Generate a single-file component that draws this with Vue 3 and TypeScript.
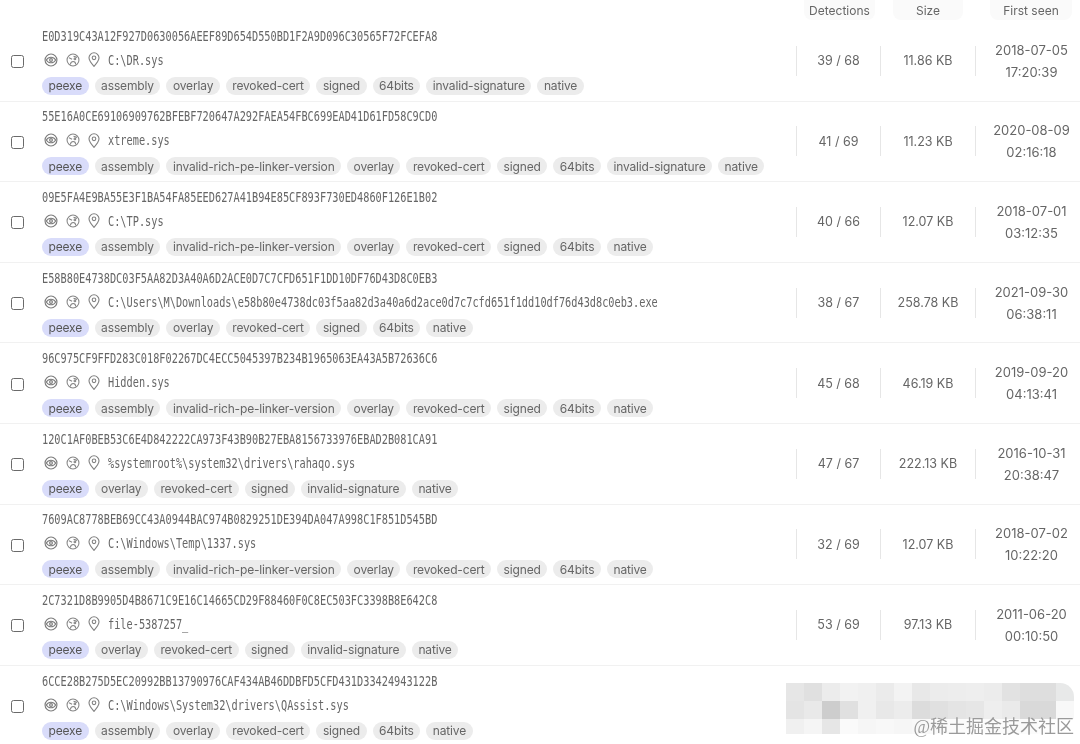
<script setup lang="ts">
interface Sample {
  hash: string
  name: string
  tags: string[]
  detections: string
  size: string
  date: string
  time: string
}

const rich = 'invalid-rich-pe-linker-version'

const samples: Sample[] = [
  { hash: 'E0D319C43A12F927D0630056AEEF89D654D550BD1F2A9D096C30565F72FCEFA8', name: 'C:\\DR.sys', tags: ['peexe', 'assembly', 'overlay', 'revoked-cert', 'signed', '64bits', 'invalid-signature', 'native'], detections: '39 / 68', size: '11.86 KB', date: '2018-07-05', time: '17:20:39' },
  { hash: '55E16A0CE69106909762BFEBF720647A292FAEA54FBC699EAD41D61FD58C9CD0', name: 'xtreme.sys', tags: ['peexe', 'assembly', rich, 'overlay', 'revoked-cert', 'signed', '64bits', 'invalid-signature', 'native'], detections: '41 / 69', size: '11.23 KB', date: '2020-08-09', time: '02:16:18' },
  { hash: '09E5FA4E9BA55E3F1BA54FA85EED627A41B94E85CF893F730ED4860F126E1B02', name: 'C:\\TP.sys', tags: ['peexe', 'assembly', rich, 'overlay', 'revoked-cert', 'signed', '64bits', 'native'], detections: '40 / 66', size: '12.07 KB', date: '2018-07-01', time: '03:12:35' },
  { hash: 'E58B80E4738DC03F5AA82D3A40A6D2ACE0D7C7CFD651F1DD10DF76D43D8C0EB3', name: 'C:\\Users\\M\\Downloads\\e58b80e4738dc03f5aa82d3a40a6d2ace0d7c7cfd651f1dd10df76d43d8c0eb3.exe', tags: ['peexe', 'assembly', 'overlay', 'revoked-cert', 'signed', '64bits', 'native'], detections: '38 / 67', size: '258.78 KB', date: '2021-09-30', time: '06:38:11' },
  { hash: '96C975CF9FFD283C018F02267DC4ECC5045397B234B1965063EA43A5B72636C6', name: 'Hidden.sys', tags: ['peexe', 'assembly', rich, 'overlay', 'revoked-cert', 'signed', '64bits', 'native'], detections: '45 / 68', size: '46.19 KB', date: '2019-09-20', time: '04:13:41' },
  { hash: '120C1AF0BEB53C6E4D842222CA973F43B90B27EBA8156733976EBAD2B081CA91', name: '%systemroot%\\system32\\drivers\\rahaqo.sys', tags: ['peexe', 'overlay', 'revoked-cert', 'signed', 'invalid-signature', 'native'], detections: '47 / 67', size: '222.13 KB', date: '2016-10-31', time: '20:38:47' },
  { hash: '7609AC8778BEB69CC43A0944BAC974B0829251DE394DA047A998C1F851D545BD', name: 'C:\\Windows\\Temp\\1337.sys', tags: ['peexe', 'assembly', rich, 'overlay', 'revoked-cert', 'signed', '64bits', 'native'], detections: '32 / 69', size: '12.07 KB', date: '2018-07-02', time: '10:22:20' },
  { hash: '2C7321D8B9905D4B8671C9E16C14665CD29F88460F0C8EC503FC3398B8E642C8', name: 'file-5387257_', tags: ['peexe', 'overlay', 'revoked-cert', 'signed', 'invalid-signature', 'native'], detections: '53 / 69', size: '97.13 KB', date: '2011-06-20', time: '00:10:50' },
  { hash: '6CCE28B275D5EC20992BB13790976CAF434AB46DDBFD5CFD431D33424943122B', name: 'C:\\Windows\\System32\\drivers\\QAssist.sys', tags: ['peexe', 'assembly', 'overlay', 'revoked-cert', 'signed', '64bits', 'native'], detections: '', size: '', date: '', time: '' }
]

// mosaic that hides the last row's figures
const mosaic: string[] = [
  '#e6e6e6', '#e0e0e0', '#ececec', '#f2f2f2', '#f0f0f0', '#ebebeb', '#f3f3f3', '#e8e8e8', '#ececec', '#ededed', '#eeeeee', '#ececec', '#e2e2e2', '#dedede', '#dedede', '#e8e9e9',
  '#e4e4e4', '#e9e9e9', '#cdcdcd', '#e0e0e0', '#f0f0f0', '#e8e8e8', '#ececec', '#dcdcdc', '#e0e0e0', '#e4e4e4', '#e6e6e6', '#eeeeee', '#eaeaea', '#d9d9d9', '#d9d9d9', '#f8f8f8',
  '#f0f0f0', '#f5f5f5', '#e6e6e6', '#fafafa', '#f6f6f6', '#f8f8f8', '#f6f6f6', '#f8f8f8', '#fafafa', '#fbfbfb', '#fcfcfc', '#fbfbfb', '#fbfbfb', '#fbfbfb', '#fdfdfd', '#ffffff'
]
</script>

<template>
  <div class="page">
    <header class="head">
      <span class="head-chip detections">Detections</span>
      <span class="head-chip size">Size</span>
      <span class="head-chip seen">First seen</span>
    </header>

    <div v-for="s in samples" :key="s.hash" class="row">
      <span class="check"></span>
      <div class="main">
        <div class="mono-line"><span class="mono">{{ s.hash }}</span></div>
        <div class="name-line">
          <svg class="ico" viewBox="0 0 16 16" fill="none" stroke="#7c7c7c" stroke-width="1.3">
            <circle cx="8" cy="8" r="6.8" />
            <path d="M2.6 8C4 5.6 6 4.8 8 4.8S12 5.6 13.4 8C12 10.4 10 11.2 8 11.2S4 10.4 2.6 8Z" />
            <circle cx="8" cy="8" r="1.6" />
          </svg>
          <svg class="ico" viewBox="0 0 16 16" fill="none" stroke="#858585" stroke-width="1.2">
            <circle cx="8" cy="8" r="6.8" />
            <path d="M3.4 5.4 7 7.2M12.6 5 8.6 3.8M5 13.2C5.2 10.8 6.6 9.6 8.2 9.6S11 10.8 11.2 13" />
            <circle cx="10.2" cy="6.8" r="1" />
          </svg>
          <svg class="ico pin" viewBox="2 0.6 12 15" fill="none" stroke="#808080" stroke-width="1.1">
            <path d="M8 15C5 11.6 3 9 3 6.4A5 5 0 0 1 13 6.4C13 9 11 11.6 8 15Z" />
            <circle cx="8" cy="6.4" r="1.8" />
          </svg>
          <span class="mono">{{ s.name }}</span>
        </div>
        <div class="tags">
          <span v-for="t in s.tags" :key="t" class="tag" :class="{ kind: t === 'peexe' }">{{ t }}</span>
        </div>
      </div>
      <div class="cell detections">{{ s.detections }}</div>
      <div class="cell size">{{ s.size }}</div>
      <div class="cell seen">
        <span>{{ s.date }}</span>
        <span>{{ s.time }}</span>
      </div>
    </div>

    <div class="cover">
      <div class="mosaic">
        <i v-for="(c, i) in mosaic" :key="i" :style="{ background: c }"></i>
      </div>
      <span class="mark">@稀土掘金技术社区</span>
    </div>
  </div>
</template>

<style scoped>
.page {
  position: relative;
  width: 1080px;
  height: 744px;
  overflow: hidden;
  background: #fff;
  color: #555;
  font-family: Inter, "Noto Sans", sans-serif;
  filter: blur(0.45px);
}
.head {
  display: flex;
  justify-content: flex-end;
  align-items: flex-start;
  height: 21px;
  font-size: 12px;
  color: #666;
}
.head-chip {
  display: flex;
  align-items: center;
  justify-content: center;
  height: 20px;
  background: #fafafa;
  border-radius: 0 0 8px 8px;
}
.head-chip.detections {
  width: 71px;
  margin-right: 18px;
}
.head-chip.size {
  width: 70px;
  margin-right: 27px;
}
.head-chip.seen {
  width: 82px;
  margin-right: 8px;
}
.row {
  display: flex;
  align-items: center;
  height: 80.6px;
  box-sizing: border-box;
  padding: 0 0 0 11px;
  border-bottom: 1px solid #f1f1f1;
}
.row:last-of-type {
  border-bottom: 0;
}
.check {
  flex: none;
  width: 13px;
  height: 13px;
  box-sizing: border-box;
  border: 1.4px solid #6a6a6a;
  border-radius: 2.5px;
  margin: 2px 18px 0 0;
}
.main {
  flex: none;
  width: 754px;
  min-width: 0;
  padding-top: 2px;
}
.mono-line {
  display: flex;
  height: 14px;
}
.mono {
  display: block;
  font-family: "DejaVu Sans Mono", monospace;
  font-size: 13.5px;
  line-height: 14px;
  color: #666;
  white-space: nowrap;
  transform: scaleX(0.76);
  transform-origin: left center;
}
.name-line {
  display: flex;
  align-items: center;
  height: 14px;
  margin-top: 10px;
  padding-left: 1.5px;
}
.ico {
  flex: none;
  width: 14px;
  height: 14px;
  margin-right: 8px;
}
.ico.pin {
  width: 12px;
  height: 15px;
  margin-right: 8px;
}
.tags {
  display: flex;
  gap: 6px;
  margin-top: 10px;
  white-space: nowrap;
}
.tag {
  display: flex;
  align-items: center;
  height: 18px;
  padding: 0 6.5px;
  border-radius: 9px;
  background: #ececec;
  font-size: 12px;
  letter-spacing: -0.15px;
  color: #666;
}
.tag.kind {
  background: #d9dcfa;
  color: #555;
}
.cell {
  flex: none;
  display: flex;
  align-items: center;
  justify-content: center;
  box-sizing: border-box;
  height: 30px;
  font-size: 12.5px;
  color: #666;
}
.row .cell:not(:empty),
.row .seen {
  border-left: 1px solid #e6e6e6;
}
.row:last-of-type .seen {
  border-left-color: transparent;
}
.cell.detections {
  width: 84px;
}
.cell.size {
  width: 95px;
}
.cell.seen {
  width: 105px;
  flex-direction: column;
  padding-left: 7px;
  font-size: 13px;
  line-height: 22px;
}
.cover {
  position: absolute;
  left: 786px;
  top: 667px;
  width: 294px;
  height: 77px;
  background: #fff;
}
.mosaic {
  position: absolute;
  left: 0;
  top: 16px;
  width: 288px;
  height: 51px;
  display: grid;
  grid-template-columns: repeat(16, 18px);
  grid-auto-rows: 18px;
  border-radius: 0 14px 14px 0;
  overflow: hidden;
}
.mark {
  position: absolute;
  right: 6px;
  bottom: 7px;
  font-family: "Liberation Serif", "Noto Sans CJK SC", serif;
  font-size: 18px;
  line-height: 20px;
  color: #9a9a9a;
  white-space: nowrap;
}
</style>
